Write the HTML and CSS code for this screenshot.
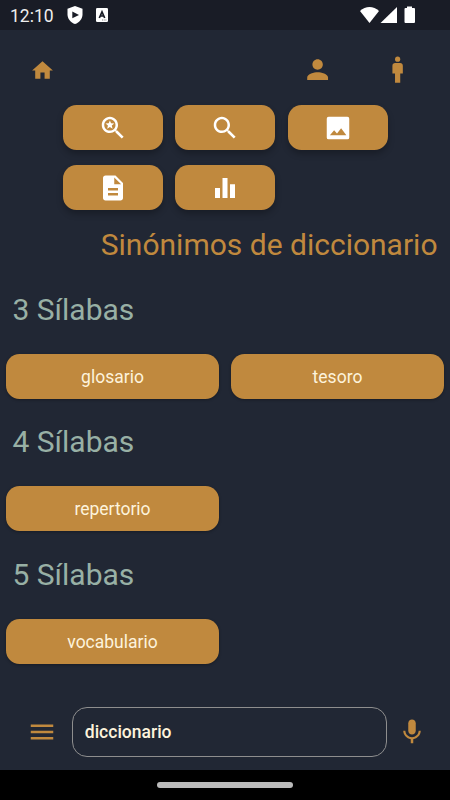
FILE: index.html
```html
<!DOCTYPE html>
<html lang="es">
<head>
  <meta charset="UTF-8">
  <meta name="viewport" content="width=device-width, initial-scale=1.0">
  <title>Sinónimos de diccionario</title>
  <link rel="stylesheet" href="styles.css">
</head>
<body>
  <div class="status-bar">
    <span class="clock">12:10</span>
    <svg class="shield" viewBox="0 0 16 18"><path fill="#fff" d="M8 0l7.500 2.800v5.400c0 4.600-3.100 8.400-7.500 9.800C3.600 16.600.5 12.800.5 8.200V2.800z"/><path fill="#191c26" d="M5.300 5.500L12 8.900l-6.700 3.400z"/></svg>
    <svg class="lang" viewBox="0 0 12 14"><rect width="12" height="14" rx="1.300" fill="#fff"/><path d="M3.300 10L6 3.800 8.700 10M4.200 8h3.600" fill="none" stroke="#191c26" stroke-width="1.700"/><path d="M6 12h5" stroke="#666" stroke-width=".8" stroke-dasharray="1 .7"/></svg>
    <svg class="system" viewBox="0 0 56 18" fill="#fff"><path d="M0 5C5.500-.5 13.500-.5 19 5L9.500 17z"/><path d="M37 1v16H20.500z"/><path d="M44.500 3a1 1 0 0 1 1-1H47V.5h5V2h2a1 1 0 0 1 1 1v13a1 1 0 0 1-1 1h-8.500a1 1 0 0 1-1-1z"/></svg>
  </div>

  <header class="top-bar">
    <svg class="icon home" viewBox="0 0 24 24"><path d="M10 20v-6h4v6h5v-8h3L12 3 2 12h3v8z"/></svg>
    <svg class="icon person" viewBox="0 0 24 24"><path d="M12 12c2.210 0 4-1.790 4-4s-1.790-4-4-4-4 1.790-4 4 1.790 4 4 4zm0 2c-2.670 0-8 1.340-8 4v2h16v-2c0-2.660-5.330-4-8-4z"/></svg>
    <svg class="icon man" viewBox="0 0 24 24"><circle cx="12" cy="4" r="2"/><path d="M14 7h-4c-1.100 0-2 .9-2 2v6h2v7h4v-7h2V9c0-1.100-.9-2-2-2z"/></svg>
  </header>

  <div class="tools">
    <button class="tool"><svg viewBox="0 0 24 24"><path d="M15.500 14h-.79l-.28-.27C15.410 12.590 16 11.110 16 9.500 16 5.910 13.090 3 9.500 3S3 5.910 3 9.500 5.910 16 9.500 16c1.610 0 3.090-.59 4.230-1.570l.27.28v.79l5 4.990L20.490 19l-4.990-5zm-6 0C7.010 14 5 11.990 5 9.500S7.010 5 9.500 5 14 7.010 14 9.500 11.990 14 9.500 14z"/><path d="M9.500 5.900l.95 2.350 2.550.18-1.960 1.630.62 2.450-2.160-1.350-2.160 1.350.62-2.450L6 8.430l2.550-.18z"/></svg></button>
    <button class="tool"><svg viewBox="0 0 24 24"><path d="M15.500 14h-.79l-.28-.27C15.410 12.590 16 11.110 16 9.500 16 5.910 13.090 3 9.500 3S3 5.910 3 9.500 5.910 16 9.500 16c1.610 0 3.090-.59 4.230-1.570l.27.28v.79l5 4.990L20.490 19l-4.990-5zm-6 0C7.010 14 5 11.990 5 9.500S7.010 5 9.500 5 14 7.010 14 9.500 11.990 14 9.500 14z"/></svg></button>
    <button class="tool"><svg viewBox="0 0 24 24"><path fill-rule="evenodd" d="M4.500 3h15A1.500 1.500 0 0 1 21 4.500v15a1.500 1.500 0 0 1-1.500 1.500h-15A1.500 1.500 0 0 1 3 19.500v-15A1.500 1.500 0 0 1 4.500 3zM5.500 17.800h13.200l-4.200-5.600-3.300 4.200-2.300-2.700z"/></svg></button>
    <button class="tool"><svg viewBox="0 0 24 24"><path d="M14 2H6c-1.100 0-1.990.9-1.990 2L4 20c0 1.100.89 2 1.990 2H18c1.100 0 2-.9 2-2V8l-6-6zm2 16H8v-2h8v2zm0-4H8v-2h8v2zm-3-5V3.500L18.500 9H13z"/></svg></button>
    <button class="tool"><svg viewBox="0 0 24 24"><path d="M10 20h4V4h-4v16zm-6 0h4v-8H4v8zM16 9v11h4V9h-4z"/></svg></button>
  </div>

  <main>
    <h1>Sinónimos de diccionario</h1>
    <section>
      <h2>3 Sílabas</h2>
      <div class="words">
        <button class="word">glosario</button>
        <button class="word">tesoro</button>
      </div>
    </section>
    <section>
      <h2>4 Sílabas</h2>
      <div class="words">
        <button class="word">repertorio</button>
      </div>
    </section>
    <section>
      <h2>5 Sílabas</h2>
      <div class="words">
        <button class="word">vocabulario</button>
      </div>
    </section>
  </main>

  <footer class="search-bar">
    <svg class="icon menu" viewBox="0 0 24 24"><path d="M3 18h18v-2H3v2zm0-5h18v-2H3v2zm0-7v2h18V6H3z"/></svg>
    <input type="text" class="search" value="diccionario">
    <svg class="icon mic" viewBox="0 0 24 24"><path d="M12 14c1.660 0 3-1.340 3-3V5c0-1.660-1.340-3-3-3S9 3.340 9 5v6c0 1.660 1.340 3 3 3z"/><path d="M17.300 11c0 3-2.540 5.100-5.300 5.100S6.700 14 6.700 11H5c0 3.410 2.720 6.230 6 6.720V21h2v-3.280c3.280-.48 6-3.300 6-6.720h-1.700z"/></svg>
  </footer>
  <div class="nav-bar"><div class="handle"></div></div>
</body>
</html>
```

FILE: styles.css
```css
* {
  box-sizing: border-box;
}

body {
  margin: 0;
  width: 450px;
  height: 800px;
  display: flex;
  flex-direction: column;
  background: #212734;
  font-family: Roboto, sans-serif;
  overflow: hidden;
}

svg {
  display: block;
  flex-shrink: 0;
}

.status-bar {
  height: 30px;
  display: flex;
  align-items: center;
  padding: 0 34px 0 10px;
  background: #191c26;
}

.clock {
  width: 57px;
  padding-top: 1px;
  color: #eee;
  font-size: 17.5px;
}

.shield {
  width: 16px;
  height: 18px;
}

.lang {
  width: 12px;
  height: 14px;
  margin-left: 13px;
}

.system {
  width: 56px;
  height: 18px;
  margin-left: auto;
}

.icon {
  width: 31.25px;
  height: 31.25px;
  fill: #c0893e;
}

.top-bar {
  height: 75px;
  display: flex;
  align-items: center;
  padding: 5px 37px 0 30px;
}

.home {
  width: 25px;
  height: 25px;
}

.person {
  margin-left: auto;
}

.man {
  margin-left: 48.75px;
}

.tools {
  display: grid;
  grid-template-columns: repeat(3, 100px);
  gap: 15px 12.5px;
  padding-left: 62.5px;
}

button {
  display: flex;
  align-items: center;
  justify-content: center;
  height: 45px;
  padding: 0;
  border: none;
  border-radius: 13.5px;
  background: #c0893e;
}

.tool {
  box-shadow: 0 4px 6px rgba(0, 0, 0, 0.25);
}

.tool svg {
  width: 30px;
  height: 30px;
  fill: #fff;
}

main {
  flex: 1;
}

h1, h2 {
  margin: 0;
  font-size: 30px;
  font-weight: 400;
  line-height: 35px;
}

h1 {
  padding: 17px 12.5px 0 0;
  color: #c0893e;
  text-align: right;
}

h2 {
  padding: 0 12.5px;
  color: #98b0a5;
}

section {
  height: 132.5px;
  padding-top: 29.6px;
}

.words {
  display: grid;
  grid-template-columns: 1fr 1fr;
  gap: 12.5px;
  padding: 27.1px 6.25px 0;
}

.word {
  color: #fdf3dc;
  font-family: inherit;
  font-size: 17.5px;
  padding-top: 1px;
  box-shadow: 0 1px 3px rgba(0, 0, 0, 0.3);
}

.search-bar {
  height: 75px;
  display: flex;
  align-items: center;
  padding: 0 22.5px 1px 27px;
}

.menu,
.mic {
  width: 30px;
  height: 30px;
}

.search {
  width: 315px;
  height: 50px;
  margin: 0 10px 0 15px;
  padding: 0 11.8px 1px;
  border: 1px solid #8e8e8e;
  border-radius: 15px;
  background: transparent;
  color: #fdf3dc;
  font-family: inherit;
  font-size: 17.5px;
  font-weight: 500;
  outline: none;
}

.nav-bar {
  height: 30px;
  display: flex;
  align-items: center;
  justify-content: center;
  background: #000;
}

.handle {
  width: 136px;
  height: 6px;
  border-radius: 3px;
  background: #bbb;
}
```
